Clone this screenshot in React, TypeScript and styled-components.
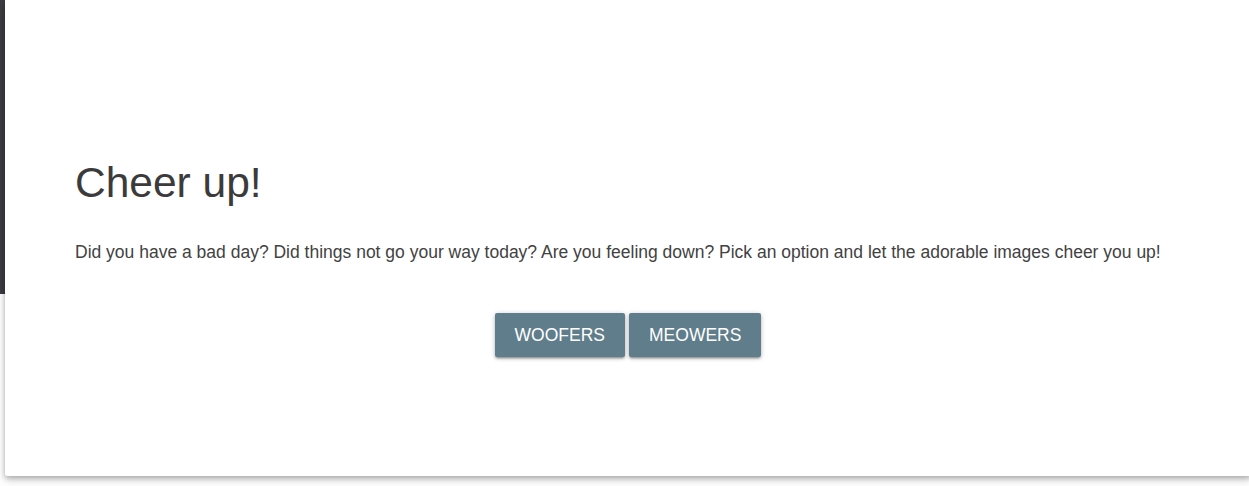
import React from "react";
import styled, { createGlobalStyle } from "styled-components";

const Global = createGlobalStyle`
  html, body {
    margin: 0;
    padding: 0;
    overflow: hidden;
  }
  body {
    width: 1249px;
    height: 486px;
    background: linear-gradient(#3d3d41 0 294px, #ffffff 294px);
    font-family: "Liberation Sans", Arial, sans-serif;
  }
`;

const Page = styled.div`
  padding-left: 5px;
`;

const Card = styled.section`
  width: 1246px;
  height: 476px;
  box-sizing: border-box;
  background: #ffffff;
  padding: 160px 70px 0;
  box-shadow: 0 2px 5px rgba(0, 0, 0, 0.22), 0 4px 10px rgba(0, 0, 0, 0.18);
  border-radius: 0 0 0 2px;
`;

const Title = styled.h3`
  margin: 0;
  font-size: 42.5px;
  line-height: 46px;
  font-weight: 400;
  color: #3b3b3b;
`;

const Lead = styled.p`
  margin: 34px 0 0;
  font-size: 17.5px;
  line-height: 24px;
  color: #424242;
  white-space: nowrap;
`;

const Actions = styled.div`
  margin-top: 49px;
  display: flex;
  justify-content: center;
  gap: 4px;
`;

const Button = styled.button`
  height: 44px;
  padding: 0 20px;
  border: none;
  border-radius: 2px;
  background: #607d8b;
  color: #ffffff;
  font-family: "Liberation Sans", Arial, sans-serif;
  font-size: 17.5px;
  text-transform: uppercase;
  letter-spacing: 0;
  cursor: pointer;
  box-shadow: 0 2px 2px 0 rgba(0, 0, 0, 0.16), 0 3px 1px -2px rgba(0, 0, 0, 0.14),
    0 1px 5px 0 rgba(0, 0, 0, 0.24);
`;

export default function App() {
  return (
    <Page>
      <Global />
      <Card>
        <Title>Cheer up!</Title>
        <Lead>
          Did you have a bad day? Did things not go your way today? Are you feeling down? Pick an
          option and let the adorable images cheer you up!
        </Lead>
        <Actions>
          <Button>Woofers</Button>
          <Button>Meowers</Button>
        </Actions>
      </Card>
    </Page>
  );
}
